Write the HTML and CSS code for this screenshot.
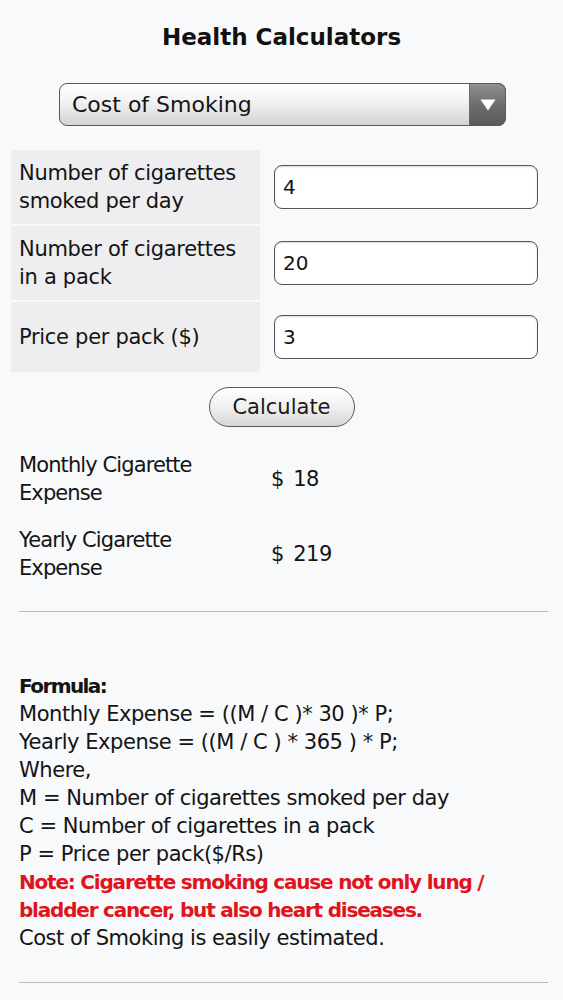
FILE: index.html
```html
<!DOCTYPE html>
<html>
<head>
<meta charset="utf-8">
<link rel="stylesheet" href="styles.css">
</head>
<body>
<div class="page">
  <h1 class="title">Health Calculators</h1>
  <div class="select-wrap">
    <select class="calc-select">
      <option>Cost of Smoking</option>
    </select>
    <span class="select-arrow"><svg width="16" height="12" viewBox="0 0 16 12"><polygon points="0.5,0.5 15.5,0.5 8,11.5" fill="#fff"/></svg></span>
  </div>
  <div class="form-grid">
    <div class="label-cell">Number of cigarettes smoked per day</div>
    <div class="input-cell"><input class="field" type="text" value="4"></div>
    <div class="label-cell">Number of cigarettes in a pack</div>
    <div class="input-cell"><input class="field" type="text" value="20"></div>
    <div class="label-cell">Price per pack ($)</div>
    <div class="input-cell"><input class="field" type="text" value="3"></div>
  </div>
  <div class="btn-row"><button class="calc-btn">Calculate</button></div>
  <div class="results">
    <div class="res-label">Monthly Cigarette Expense</div>
    <div class="res-value">$ 18</div>
    <div class="res-label">Yearly Cigarette Expense</div>
    <div class="res-value">$ 219</div>
  </div>
  <hr class="divider">
  <div class="formula">
    <div class="f-head">Formula:</div>
    <div>Monthly Expense = ((M / C )* 30 )* P;</div>
    <div>Yearly Expense = ((M / C ) * 365 ) * P;</div>
    <div>Where,</div>
    <div>M = Number of cigarettes smoked per day</div>
    <div>C = Number of cigarettes in a pack</div>
    <div>P = Price per pack($/Rs)</div>
    <div class="note">Note: Cigarette smoking cause not only lung / bladder cancer, but also heart diseases.</div>
    <div>Cost of Smoking is easily estimated.</div>
  </div>
  <hr class="divider divider-bottom">
</div>
</body>
</html>
```

FILE: styles.css
```css
html, body {
  margin: 0;
  padding: 0;
  background: #f7f9fb;
}
body {
  font-family: "DejaVu Sans", sans-serif;
  color: #141414;
  font-size: 21px;
  line-height: 28px;
  letter-spacing: -0.45px;
}
.page {
  padding: 0 11px;
}
.title {
  margin: 22px 0 0;
  font-size: 23px;
  line-height: 30px;
  font-weight: bold;
  text-align: center;
  color: #111;
  letter-spacing: 0;
}
.select-wrap {
  position: relative;
  width: 447px;
  height: 43px;
  margin: 31px 0 0 48px;
}
.calc-select {
  -webkit-appearance: none;
  appearance: none;
  width: 100%;
  height: 100%;
  box-sizing: border-box;
  border: 1.5px solid #5a5a5a;
  border-radius: 8px;
  background: linear-gradient(#fefefe, #f3f3f3 40%, #d4d4d4);
  font-family: inherit;
  font-size: 22px;
  letter-spacing: 0;
  color: #141414;
  padding: 0 0 0 12px;
  margin: 0;
  outline: none;
}
.select-arrow {
  position: absolute;
  top: 0;
  right: 0;
  width: 37px;
  height: 43px;
  box-sizing: border-box;
  border: 1.5px solid #5a5a5a;
  border-left: 1px solid #6a6a6a;
  border-radius: 0 8px 8px 0;
  background: linear-gradient(#909090, #6e6e6e 50%, #5a5a5a);
  display: flex;
  align-items: center;
  justify-content: center;
  pointer-events: none;
}
.form-grid {
  display: grid;
  grid-template-columns: 249px 1fr;
  row-gap: 2px;
  margin-top: 24px;
}
.label-cell {
  background: #eeeef0;
  padding: 9px 8px;
  min-height: 56px;
  display: flex;
  align-items: center;
  letter-spacing: -0.3px;
}
.label-cell:nth-child(5) {
  min-height: 52px;
}
.input-cell {
  display: flex;
  align-items: center;
  padding-left: 14px;
}
.field {
  width: 264px;
  height: 44px;
  box-sizing: border-box;
  border: 1.5px solid #555;
  border-radius: 8px;
  background: #fff;
  font-family: inherit;
  font-size: 20px;
  color: #141414;
  padding: 0 8px;
  margin: 0;
  box-shadow: inset 0 1px 2px rgba(0,0,0,0.15);
}
.btn-row {
  display: flex;
  justify-content: center;
  margin-top: 15px;
}
.calc-btn {
  width: 146px;
  height: 40px;
  box-sizing: border-box;
  border: 1.5px solid #5a5a5a;
  border-radius: 20px;
  background: linear-gradient(#ffffff, #f0f0f0 50%, #d6d6d6);
  font-family: inherit;
  font-size: 21px;
  letter-spacing: 0;
  color: #1a1a1a;
  padding: 0;
  margin: 0;
}
.results {
  display: grid;
  grid-template-columns: 252px 1fr;
  row-gap: 19px;
  margin-top: 24px;
  padding-left: 8px;
  align-items: center;
}
.res-label {
  padding-right: 40px;
  letter-spacing: -0.9px;
}
.res-value {
  font-size: 21px;
  word-spacing: 3px;
}
.divider {
  border: 0;
  border-top: 1px solid #bbbbbb;
  margin: 29px 4px 0 8px;
  height: 0;
}
.formula {
  margin-top: 60px;
  padding-left: 8px;
}
.f-head {
  font-weight: bold;
  font-size: 20px;
  letter-spacing: -1.6px;
}
.note {
  color: #e0141c;
  font-weight: bold;
  font-size: 20px;
  letter-spacing: -1.2px;
}
.divider-bottom {
  margin-top: 30px;
}
```
